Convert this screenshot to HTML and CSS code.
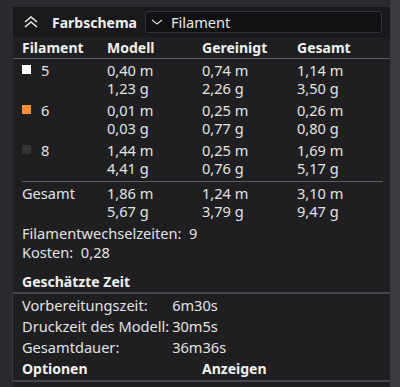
FILE: index.html
```html
<!DOCTYPE html>
<html lang="de">
<head>
    <meta charset="UTF-8">
    <title>Farbschema</title>
    <link rel="stylesheet" href="styles.css">
</head>
<body>
    <div class="panel">
        <div class="kopf">
            <svg class="einklappen" width="16" height="12" viewBox="0 0 16 12">
                <path d="M2 6 L8 1 L14 6 M2 11 L8 6 L14 11" fill="none" stroke="#e8e8e8" stroke-width="1.6"/>
            </svg>
            <span class="titel">Farbschema</span>
            <div class="auswahl">
                <svg width="12" height="8" viewBox="0 0 12 8">
                    <path d="M1 2 L6 6 L11 2" fill="none" stroke="#d8d8d8" stroke-width="1.2"/>
                </svg>
                <span>Filament</span>
            </div>
        </div>

        <div class="tabelle kopfzeile">
            <div>Filament</div>
            <div>Modell</div>
            <div>Gereinigt</div>
            <div>Gesamt</div>
        </div>

        <div class="zeilen">
            <div class="tabelle zeile">
                <div class="fil"><span class="farbe weiss"></span>5</div>
                <div>0,40 m<br>1,23 g</div>
                <div>0,74 m<br>2,26 g</div>
                <div>1,14 m<br>3,50 g</div>
            </div>
            <div class="tabelle zeile">
                <div class="fil"><span class="farbe orange"></span>6</div>
                <div>0,01 m<br>0,03 g</div>
                <div>0,25 m<br>0,77 g</div>
                <div>0,26 m<br>0,80 g</div>
            </div>
            <div class="tabelle zeile">
                <div class="fil"><span class="farbe dunkel"></span>8</div>
                <div>1,44 m<br>4,41 g</div>
                <div>0,25 m<br>0,76 g</div>
                <div>1,69 m<br>5,17 g</div>
            </div>
        </div>

        <div class="tabelle summe">
            <div>Gesamt</div>
            <div>1,86 m<br>5,67 g</div>
            <div>1,24 m<br>3,79 g</div>
            <div>3,10 m<br>9,47 g</div>
        </div>

        <div class="info">
            <p>Filamentwechselzeiten:&nbsp; 9</p>
            <p>Kosten:&nbsp; 0,28</p>
        </div>

        <h3 class="abschnitt">Geschätzte Zeit</h3>

        <div class="zeitbox">
            <div class="zeiten">
                <span>Vorbereitungszeit:</span><span>6m30s</span>
                <span>Druckzeit des Modell:</span><span>30m5s</span>
                <span>Gesamtdauer:</span><span>36m36s</span>
            </div>
            <div class="tabelle optionen">
                <div>Optionen</div>
                <div></div>
                <div>Anzeigen</div>
                <div></div>
            </div>
        </div>
    </div>
    <div class="leiste"></div>
</body>
</html>
```

FILE: styles.css
```css
body {
    margin: 0;
    height: 387px;
    display: flex;
    background: #2b2b2f;
    font-family: "Noto Sans", sans-serif;
    font-size: 14.6px;
    color: #e2e2e2;
    overflow: hidden;
}
.panel {
    margin: 7px 0 0 13px;
    width: 377px;
    background: #1f1f21;
}
.leiste {
    width: 10px;
    background: #3a3a3f;
}
.kopf {
    height: 30px;
    display: flex;
    align-items: center;
    background: #19191b;
    padding-left: 10px;
}
.einklappen {
    margin-right: 13px;
}
.titel {
    font-weight: bold;
    font-size: 14px;
    color: #f0f0f0;
}
.auswahl {
    margin: 0 8px 0 8px;
    flex: 1;
    height: 22px;
    box-sizing: border-box;
    border: 1px solid #34343a;
    border-radius: 3px;
    background: #111113;
    display: flex;
    align-items: center;
    gap: 8px;
    padding-left: 5px;
    color: #e8e8e8;
}
.tabelle {
    display: grid;
    grid-template-columns: 85px 95px 95px 1fr;
    padding-left: 9px;
}
.kopfzeile {
    font-weight: bold;
    font-size: 14px;
    color: #f0f0f0;
    height: 21px;
    align-items: center;
    border-bottom: 1px solid #5e5e62;
}
.zeilen {
    padding-top: 2px;
    margin-left: 9px;
    margin-right: 7px;
    border-bottom: 1px solid #5e5e62;
}
.zeilen .tabelle {
    padding-left: 0;
}
.zeile {
    line-height: 18px;
    margin-bottom: 4px;
}
.fil {
    display: flex;
    align-items: flex-start;
}
.farbe {
    width: 9px;
    height: 9px;
    margin: 4px 10px 0 0;
}
.weiss { background: #ffffff; }
.orange { background: #f5922f; }
.dunkel { background: #333335; }
.summe {
    line-height: 18px;
    padding-top: 2px;
}
.info {
    padding-left: 9px;
    margin-top: 4px;
}
.info p {
    margin: 0;
    line-height: 19px;
}
.abschnitt {
    margin: 10px 0 0;
    padding-left: 9px;
    font-size: 14px;
    height: 19px;
    line-height: 19px;
    color: #f0f0f0;
}
.zeitbox {
    margin-top: 1px;
    border-top: 2px solid #46464a;
    border-bottom: 2px solid #46464a;
    border-left: 1px solid #3c3c40;
    margin-left: -1px;
    padding-top: 1px;
}
.zeiten {
    display: grid;
    grid-template-columns: max-content 1fr;
    column-gap: 3px;
    padding-left: 9px;
    line-height: 21px;
}
.optionen {
    font-weight: bold;
    font-size: 14px;
    color: #f0f0f0;
    line-height: 22px;
}
```
